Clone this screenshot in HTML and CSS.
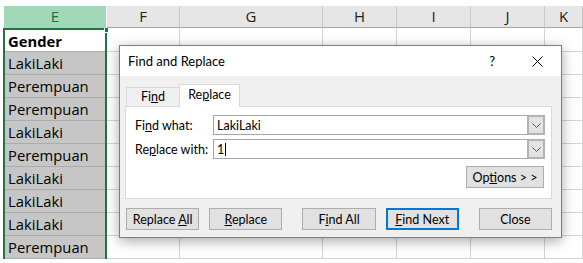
FILE: index.html
```html
<!DOCTYPE html>
<html lang="en">

<head>
  <meta charset="UTF-8" />
  <title>Find and Replace</title>
  <link rel="stylesheet" href="styles.css">
</head>

<body>
  <div class="sheet">
    <div class="col col-e">
      <div class="head">E</div>
      <div class="sel-body">
        <span class="handle"></span>
        <div class="cell first bold">Gender</div>
        <div class="cell grey">LakiLaki</div>
        <div class="cell grey">Perempuan</div>
        <div class="cell grey">Perempuan</div>
        <div class="cell grey">LakiLaki</div>
        <div class="cell grey">Perempuan</div>
        <div class="cell grey">LakiLaki</div>
        <div class="cell grey">LakiLaki</div>
        <div class="cell grey">LakiLaki</div>
        <div class="cell grey">Perempuan</div>
      </div>
    </div>
    <div class="col col-f">
      <div class="head">F</div>
      <div class="cell first"></div><div class="cell"></div><div class="cell"></div><div class="cell"></div><div class="cell"></div><div class="cell"></div><div class="cell"></div><div class="cell"></div><div class="cell"></div><div class="cell"></div>
    </div>
    <div class="col col-g">
      <div class="head">G</div>
      <div class="cell first"></div><div class="cell"></div><div class="cell"></div><div class="cell"></div><div class="cell"></div><div class="cell"></div><div class="cell"></div><div class="cell"></div><div class="cell"></div><div class="cell"></div>
    </div>
    <div class="col col-h">
      <div class="head">H</div>
      <div class="cell first"></div><div class="cell"></div><div class="cell"></div><div class="cell"></div><div class="cell"></div><div class="cell"></div><div class="cell"></div><div class="cell"></div><div class="cell"></div><div class="cell"></div>
    </div>
    <div class="col col-i">
      <div class="head">I</div>
      <div class="cell first"></div><div class="cell"></div><div class="cell"></div><div class="cell"></div><div class="cell"></div><div class="cell"></div><div class="cell"></div><div class="cell"></div><div class="cell"></div><div class="cell"></div>
    </div>
    <div class="col col-j">
      <div class="head">J</div>
      <div class="cell first"></div><div class="cell"></div><div class="cell"></div><div class="cell"></div><div class="cell"></div><div class="cell"></div><div class="cell"></div><div class="cell"></div><div class="cell"></div><div class="cell"></div>
    </div>
    <div class="col col-k">
      <div class="head">K</div>
      <div class="cell first"></div><div class="cell"></div><div class="cell"></div><div class="cell"></div><div class="cell"></div><div class="cell"></div><div class="cell"></div><div class="cell"></div><div class="cell"></div><div class="cell"></div>
    </div>
  </div>

  <div class="dialog">
    <div class="titlebar">
      <span class="title">Find and Replace</span>
      <span class="help">?</span>
      <svg class="close-x" width="11" height="11" viewBox="0 0 11 11">
        <path d="M0.5 0.5 L10.5 10.5 M10.5 0.5 L0.5 10.5" stroke="#000" stroke-width="1" fill="none" />
      </svg>
    </div>
    <div class="dlg-body">
      <div class="tabs">
        <div class="tab">Fi<u>n</u>d</div>
        <div class="tab active">Re<u>p</u>lace</div>
      </div>
      <div class="panel">
        <div class="field">
          <label>Fi<u>n</u>d what:</label>
          <div class="combo">
            <span class="value">LakiLaki</span>
            <span class="drop"><svg width="9" height="5" viewBox="0 0 9 5"><path d="M0.5 0.5 L4.5 4.5 L8.5 0.5" stroke="#555" fill="none" /></svg></span>
          </div>
        </div>
        <div class="field">
          <label>Re<u>p</u>lace with:</label>
          <div class="combo">
            <span class="value">1<span class="caret"></span></span>
            <span class="drop"><svg width="9" height="5" viewBox="0 0 9 5"><path d="M0.5 0.5 L4.5 4.5 L8.5 0.5" stroke="#555" fill="none" /></svg></span>
          </div>
        </div>
        <div class="options-row">
          <button class="btn options">Op<u>t</u>ions &gt; &gt;</button>
        </div>
      </div>
      <div class="actions">
        <button class="btn">Replace <u>A</u>ll</button>
        <button class="btn"><u>R</u>eplace</button>
        <button class="btn wide-gap">F<u>i</u>nd All</button>
        <button class="btn default"><u>F</u>ind Next</button>
        <button class="btn wide-gap">Close</button>
      </div>
    </div>
  </div>
</body>

</html>
```

FILE: styles.css
```css
* {
  box-sizing: border-box;
  margin: 0;
  padding: 0;
}

body {
  width: 583px;
  height: 263px;
  overflow: hidden;
  background: #fff;
  position: relative;
  font-family: "Open Sans", "Noto Sans", sans-serif;
}

/* spreadsheet */
.sheet {
  display: flex;
  padding: 6px 0 0 3px;
}

.col {
  display: flex;
  flex-direction: column;
  flex: none;
}

.col-e { width: 104px; }
.col-f { width: 73px; }
.col-g { width: 143px; }
.col-h { width: 74px; }
.col-i { width: 74px; }
.col-j { width: 74px; }
.col-k { flex: 1; }

.head {
  height: 22px;
  background: #e6e6e6;
  border-right: 1px solid #c8c8c8;
  border-bottom: 1px solid #a6a6a6;
  color: #222;
  font-size: 15px;
  text-align: center;
  line-height: 21px;
}

.col-e .head {
  margin-left: 1px;
  margin-right: 1px;
  background: #a0d8b8;
  color: #1f6b43;
  border-right: none;
  border-bottom: none;
}

.cell {
  height: 23px;
  border-right: 1px solid #d4d4d4;
  border-bottom: 1px solid #d4d4d4;
  font-size: 14.8px;
  line-height: 22px;
  padding-left: 3px;
  color: #000;
  white-space: nowrap;
}

.cell.first {
  height: 24px;
}

.sel-body {
  position: relative;
  border: 2px solid #217346;
  border-bottom: none;
  flex: 1;
}

.sel-body .cell {
  border-right: none;
  border-bottom-color: #acacac;
}

.sel-body .cell.first {
  height: 22px;
  background: #fff;
}

.cell.grey {
  background: #c6c6c6;
}

.bold {
  font-weight: 700;
}

.handle {
  position: absolute;
  top: -2px;
  right: -4px;
  width: 5px;
  height: 5px;
  background: #217346;
  border: 1px solid #fff;
  border-top: none;
}

/* dialog */
.dialog {
  position: absolute;
  left: 119px;
  top: 45px;
  width: 443px;
  height: 193px;
  border: 1px solid #7e7e7e;
  background: #f0f0f0;
  box-shadow: 0 3px 12px rgba(0, 0, 0, 0.35);
  font-family: Lato, "Noto Sans", sans-serif;
  font-size: 12.5px;
  color: #000;
}

.titlebar {
  height: 30px;
  background: #fff;
  display: flex;
  align-items: center;
  padding-left: 8px;
}

.title {
  flex: 1;
  font-size: 13px;
}

.help {
  font-size: 13px;
  margin-right: 37px;
}

.close-x {
  margin-right: 18px;
}

.dlg-body {
  padding: 7px 9px 0 5px;
}

.tabs {
  display: flex;
  align-items: flex-end;
  height: 23px;
  padding-left: 1px;
}

.tab {
  height: 19px;
  width: 53px;
  text-align: center;
  line-height: 18px;
  border: 1px solid #d9d9d9;
  border-bottom: none;
  border-right: none;
  background: #f0f0f0;
}

.tab.active {
  height: 23px;
  width: 61px;
  background: #fff;
  border-right: 1px solid #d9d9d9;
  line-height: 20px;
  margin-bottom: -1px;
  position: relative;
  z-index: 1;
}

.panel {
  background: #fff;
  border: 1px solid #d9d9d9;
  height: 93px;
  padding: 8px 6px 0 9px;
}

.field {
  display: flex;
  align-items: center;
  margin-bottom: 4px;
}

.field label {
  width: 78px;
  flex: none;
}

.combo {
  flex: 1;
  height: 20px;
  border: 1px solid #a6a6a6;
  display: flex;
  align-items: center;
}

.combo .value {
  flex: 1;
  padding-left: 3px;
  display: flex;
  align-items: center;
}

.caret {
  display: inline-block;
  width: 1px;
  height: 13px;
  background: #000;
  margin-left: 1px;
}

.drop {
  width: 18px;
  height: 20px;
  margin: -1px -1px -1px 0;
  background: #e3e3e3;
  border: 2px solid #b2b2b2;
  display: flex;
  align-items: center;
  justify-content: center;
}

.options-row {
  display: flex;
  justify-content: flex-end;
  margin-top: 7px;
  padding-right: 1px;
}

.btn {
  font-family: inherit;
  font-size: 12.5px;
  color: #000;
  background: #e1e1e1;
  border: 1px solid #adadad;
  width: 74px;
  height: 22px;
}

.options {
  width: 78px;
}

.actions {
  display: flex;
  gap: 10px;
  padding: 9px 0 0 1px;
}

.btn.wide-gap {
  margin-left: 10px;
}

.btn.default {
  border: 2px solid #0078d7;
}
```
